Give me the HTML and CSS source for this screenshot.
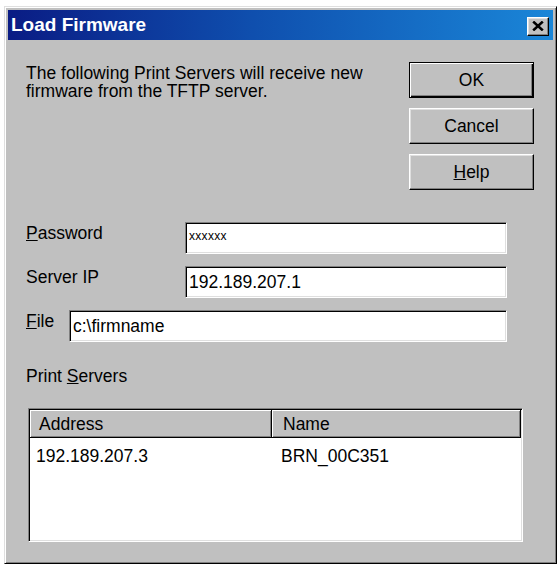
FILE: index.html
```html
<!DOCTYPE html>
<html>
<head>
<meta charset="utf-8">
<title>Load Firmware</title>
<link rel="stylesheet" href="styles.css">
</head>
<body>
<div class="dialog">
  <div class="titlebar">
    <span class="title">Load Firmware</span>
    <button class="close" aria-label="Close">
      <svg width="12" height="10" viewBox="0 0 12 10"><path d="M1.2 0.6 L10.8 9.4 M10.8 0.6 L1.2 9.4" stroke="#000" stroke-width="2.6" fill="none"/></svg>
    </button>
  </div>
  <div class="content">
    <div class="top">
      <p class="intro">The following Print Servers will receive new firmware from the TFTP server.</p>
      <div class="actions">
        <button class="btn default">OK</button>
        <button class="btn">Cancel</button>
        <button class="btn"><u>H</u>elp</button>
      </div>
    </div>
    <div class="fields">
      <div class="row">
        <span class="label wide"><u>P</u>assword</span>
        <div class="edit"><span class="mask">xxxxxx</span></div>
      </div>
      <div class="row">
        <span class="label wide">Server IP</span>
        <div class="edit">192.189.207.1</div>
      </div>
      <div class="row">
        <span class="label narrow"><u>F</u>ile</span>
        <div class="edit">c:\firmname</div>
      </div>
    </div>
    <div class="group-label">Print <u>S</u>ervers</div>
    <div class="listview">
      <div class="lv-header">
        <div class="hcell c1">Address</div>
        <div class="hcell c2">Name</div>
      </div>
      <div class="lv-row">
        <div class="cell c1">192.189.207.3</div>
        <div class="cell c2">BRN_00C351</div>
      </div>
    </div>
  </div>
</div>
</body>
</html>
```

FILE: styles.css
```css
body {
  margin: 0;
  background: #fff;
  font-family: "Liberation Sans", Arial, sans-serif;
  font-size: 17.5px;
  line-height: 18px;
  color: #000;
}

/* window frame */
.dialog {
  margin: 6px 0 0 4px;
  width: 553px;
  height: 558px;
  box-sizing: border-box;
  background: #c0c0c0;
  border: 1px solid;
  border-color: #dfdfdf #000 #000 #dfdfdf;
  box-shadow: inset 1px 1px 0 #fff, inset -1px -1px 0 #808080;
  padding: 3px;
  display: flex;
  flex-direction: column;
}

.titlebar {
  height: 30px;
  flex: none;
  display: flex;
  align-items: center;
  justify-content: space-between;
  padding: 0 4px 0 3px;
  background: linear-gradient(to right, #0a1c84 0%, #0f4fae 45%, #1a86d8 100%);
}

.title {
  color: #fff;
  font-weight: bold;
  font-size: 19px;
  line-height: 22px;
}

.close {
  width: 22px;
  height: 19px;
  padding: 0;
  margin-top: 2px;
  display: flex;
  align-items: center;
  justify-content: center;
  background: #c0c0c0;
  border: 1px solid;
  border-color: #fff #000 #000 #fff;
  box-shadow: inset -1px -1px 0 #808080, inset 1px 1px 0 #dfdfdf;
}

.content {
  flex: 1;
  padding-left: 18px;
}

/* message and command buttons */
.top {
  display: flex;
  padding-top: 22px;
}

.intro {
  margin: 0;
  padding-top: 2px;
  width: 370px;
}

.actions {
  margin-left: auto;
  margin-right: 19px;
  width: 125px;
  display: flex;
  flex-direction: column;
  gap: 10px;
}

.btn {
  height: 36px;
  padding: 0;
  font: inherit;
  color: #000;
  background: #c0c0c0;
  border: 1px solid;
  border-color: #fff #000 #000 #fff;
  box-shadow: inset -1px -1px 0 #808080, inset 1px 1px 0 #dfdfdf;
}

.btn.default {
  border-color: #000;
  box-shadow: inset 1px 1px 0 #fff, inset -1px -1px 0 #000, inset -2px -2px 0 #808080;
}

/* edit fields */
.fields {
  margin-top: 32px;
  margin-right: 46px;
  display: flex;
  flex-direction: column;
  gap: 12px;
}

.row {
  display: flex;
  align-items: flex-start;
}

.label {
  flex: none;
  margin-top: 2px;
}

.label.wide { width: 159px; }
.label.narrow { width: 43px; }

.edit {
  flex: 1;
  height: 32px;
  box-sizing: border-box;
  background: #fff;
  border: 1px solid;
  border-color: #808080 #fff #fff #808080;
  box-shadow: inset 1px 1px 0 #000, inset -1px -1px 0 #dfdfdf;
  padding: 6px 0 0 3px;
  white-space: nowrap;
}

.mask {
  font-size: 12px;
  line-height: 12px;
  display: inline-block;
  vertical-align: top;
  margin-top: 1px;
  letter-spacing: 0.3px;
}

.group-label {
  margin-top: 25px;
}

/* list view */
.listview {
  margin: 23px 0 0 2px;
  width: 495px;
  height: 134px;
  box-sizing: border-box;
  background: #fff;
  border: 1px solid;
  border-color: #808080 #fff #fff #808080;
  box-shadow: inset 1px 1px 0 #000, inset -1px -1px 0 #dfdfdf;
  padding: 1px;
}

.lv-header {
  display: flex;
  height: 28px;
}

.hcell {
  box-sizing: border-box;
  height: 28px;
  background: #c0c0c0;
  border-right: 1px solid #000;
  border-bottom: 1px solid #000;
  box-shadow: inset 1px 1px 0 #fff, inset -1px -1px 0 #808080;
  padding: 5px 0 0 9px;
}

.hcell.c1 { width: 242px; }
.hcell.c2 { flex: 1; padding-left: 11px; }

.lv-row {
  display: flex;
  margin-top: 9px;
}

.cell.c1 { width: 242px; box-sizing: border-box; padding-left: 6px; }
.cell.c2 { padding-left: 9px; }
```
